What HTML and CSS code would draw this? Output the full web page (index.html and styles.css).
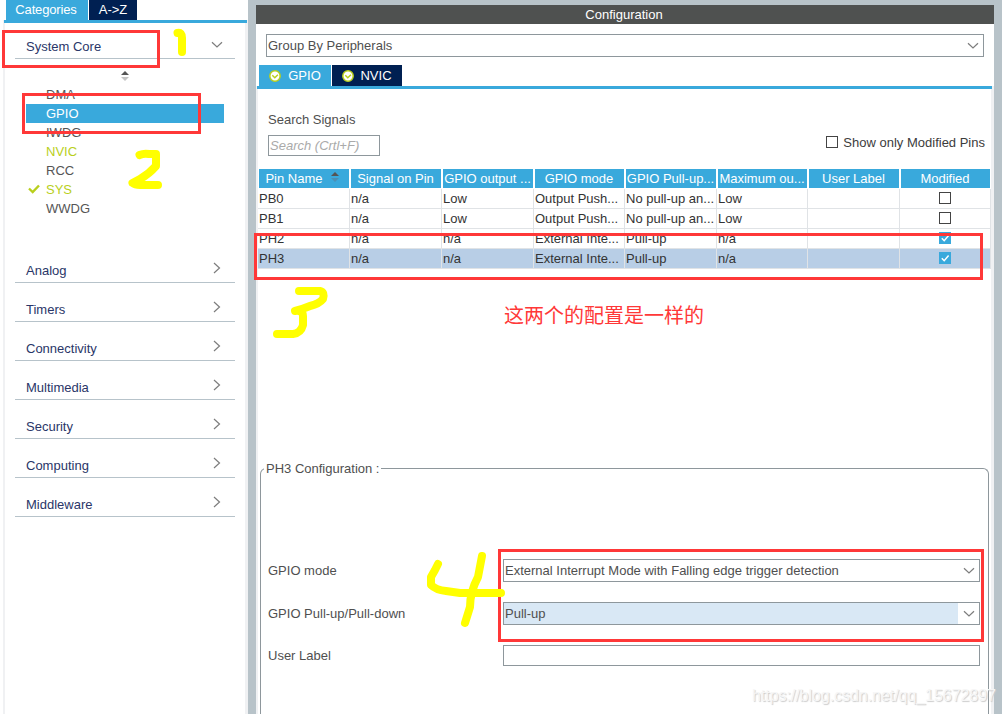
FILE: index.html
```html
<!DOCTYPE html>
<html lang="en">
<head>
<meta charset="utf-8">
<title>Configuration</title>
<link rel="stylesheet" href="styles.css">
</head>
<body>
<svg class="defs" width="0" height="0">
  <symbol id="right" viewBox="0 0 8 12"><path d="M1 1L6.500 6L1 11" fill="none" stroke="#7d7d7d" stroke-width="1.2"/></symbol>
  <symbol id="down" viewBox="0 0 12 8"><path d="M1 1.2L6 6L11 1.2" fill="none" stroke="#7d7d7d" stroke-width="1.2"/></symbol>
  <symbol id="ok" viewBox="0 0 12 12"><circle cx="6" cy="6" r="5.2" fill="#fff" stroke="#b9cf1c" stroke-width="1.5"/><path d="M3.3 5.3L5.8 7.7L8.9 4.7" fill="none" stroke="#b9cf1c" stroke-width="1.5"/></symbol>
  <symbol id="tick" viewBox="0 0 12 12"><path d="M2.8 6.2L5.2 8.7L9.6 3.6" fill="none" stroke="#fff" stroke-width="1.5"/></symbol>
</svg>
<div class="app">
  <aside class="sidebar">
    <div class="side-tabs"><span class="tab cat">Categories</span><span class="tab dark az">A-&gt;Z</span></div>
    <div class="side-body">
      <div class="group first"><span>System Core</span><svg class="i-down"><use href="#down"/></svg></div>
      <div class="open">
        <svg class="sort" viewBox="0 0 8 10"><path d="M0 4L4 0L8 4Z" fill="#555"/><path d="M0 6H8L4 10Z" fill="#c4c4c4"/></svg>
        <ul class="list">
          <li>DMA</li>
          <li class="active">GPIO</li>
          <li>IWDG</li>
          <li class="green">NVIC</li>
          <li>RCC</li>
          <li class="green"><svg class="check" viewBox="0 0 12 10"><path d="M1 4.5L4.7 8L11 1.5" fill="none" stroke="#b9cf1c" stroke-width="2.4"/></svg>SYS</li>
          <li>WWDG</li>
        </ul>
      </div>
      <div class="group"><span>Analog</span><svg class="i-right"><use href="#right"/></svg></div>
      <div class="group"><span>Timers</span><svg class="i-right"><use href="#right"/></svg></div>
      <div class="group"><span>Connectivity</span><svg class="i-right"><use href="#right"/></svg></div>
      <div class="group"><span>Multimedia</span><svg class="i-right"><use href="#right"/></svg></div>
      <div class="group"><span>Security</span><svg class="i-right"><use href="#right"/></svg></div>
      <div class="group"><span>Computing</span><svg class="i-right"><use href="#right"/></svg></div>
      <div class="group"><span>Middleware</span><svg class="i-right"><use href="#right"/></svg></div>
    </div>
  </aside>
  <main class="frame">
    <div class="panel">
      <header class="title">Configuration</header>
      <div class="combo grouping"><span>Group By Peripherals</span><svg class="i-down"><use href="#down"/></svg></div>
      <div class="tabs">
        <span class="tab gpio"><svg class="i-ok"><use href="#ok"/></svg>GPIO</span>
        <span class="tab dark nvic"><svg class="i-ok"><use href="#ok"/></svg>NVIC</span>
      </div>
      <section class="content">
        <div class="filters">
          <div class="search"><label>Search Signals</label><div class="search-box">Search (Crtl+F)</div></div>
          <div class="modified"><i class="box"></i><span>Show only Modified Pins</span></div>
        </div>
        <div class="table">
          <div class="row head"><div><b>Pin Name</b><svg class="sort" viewBox="0 0 8 10"><path d="M0 4L4 0L8 4Z" fill="#555"/><path d="M0 6H8L4 10Z" fill="#4a90b5"/></svg></div><div>Signal on Pin</div><div>GPIO output ...</div><div>GPIO mode</div><div>GPIO Pull-up...</div><div>Maximum ou...</div><div>User Label</div><div>Modified</div></div>
          <div class="row"><div>PB0</div><div>n/a</div><div>Low</div><div>Output Push...</div><div>No pull-up an...</div><div>Low</div><div></div><div><i class="box"></i></div></div>
          <div class="row"><div>PB1</div><div>n/a</div><div>Low</div><div>Output Push...</div><div>No pull-up an...</div><div>Low</div><div></div><div><i class="box"></i></div></div>
          <div class="row"><div>PH2</div><div>n/a</div><div>n/a</div><div>External Inte...</div><div>Pull-up</div><div>n/a</div><div></div><div><svg class="box on"><use href="#tick"/></svg></div></div>
          <div class="row selected"><div>PH3</div><div>n/a</div><div>n/a</div><div>External Inte...</div><div>Pull-up</div><div>n/a</div><div></div><div><svg class="box on"><use href="#tick"/></svg></div></div>
        </div>
        <div class="config">
          <div class="legend">PH3 Configuration :</div>
          <div class="field"><label>GPIO mode</label><div class="combo"><span>External Interrupt Mode with Falling edge trigger detection</span><svg class="i-down"><use href="#down"/></svg></div></div>
          <div class="field"><label>GPIO Pull-up/Pull-down</label><div class="combo focus"><span>Pull-up</span><svg class="i-down"><use href="#down"/></svg></div></div>
          <div class="field last"><label>User Label</label><div class="combo plain"></div></div>
        </div>
      </section>
    </div>
  </main>
</div>
<svg class="marks" viewBox="0 0 1005 714">
  <g fill="none" stroke="#ff3838" stroke-width="3">
    <rect x="3.500" y="31.500" width="155" height="35"/>
    <rect x="23.500" y="94.500" width="176" height="38"/>
    <rect x="255.500" y="234.500" width="726" height="44"/>
    <rect x="499.500" y="550.500" width="483" height="90"/>
  </g>
  <g fill="none" stroke="#ff0" stroke-width="8" stroke-linecap="round" stroke-linejoin="round">
    <path d="M177.500 33Q182 32 182 38V52"/>
    <path d="M139.500 155Q144 153 149 154L156 154V166Q149 174 140 179L132.500 183Q135 185 140 185H158"/>
    <path d="M299 291H320Q325 292 323 299Q319 304 310 306Q303 309 295 311Q303 310 303 316V325Q301 333 293 334H277"/>
    <path d="M438 564L435 570L431 577V585Q436 590 446 591L460 593H501M482 556L478 577Q470 592 470 607L465 623"/>
  </g>
</svg>
<div class="note">这两个的配置是一样的</div>
<div class="watermark">https://blog.csdn.net/qq_15672897</div>
</body>
</html>
```
FILE: styles.css
```css
* { box-sizing: border-box; }
body { margin: 0; background: #fff; overflow: hidden; font: 13px/16px "Liberation Sans", Arial, sans-serif; color: #4f4f4f; position: relative; }
.defs { position: absolute; }
.app { display: flex; width: 1002px; height: 714px; }
.sidebar { width: 248px; padding-left: 3px; }
.side-tabs { display: flex; gap: 1px; height: 20px; padding-left: 3px; }
.tab { display: flex; align-items: center; justify-content: center; background: #39a9dc; color: #fff; }
.tab.dark { background: #002052; }
.cat { width: 82px; letter-spacing: -0.15px; padding-right: 2px; }
.az { width: 48px; }
.side-body { height: 694px; border: solid #f0f1f3; border-width: 0 3px 0 2px; position: relative; padding: 0 10px; }
.side-body::before { content: ""; position: absolute; left: -1px; right: -2px; top: 0; height: 3px; background: #39a9dc; }
.group { display: flex; justify-content: space-between; height: 39px; padding: 18px 14px 0 11px; border-bottom: 1px solid #b7c3ca; color: #2a3668; }
.group span { padding-top: 1px; }
.i-right { width: 8px; height: 12px; }
.i-down { width: 12px; height: 8px; }
.group .i-down { margin-top: 3px; margin-right: -2px; }
.open { height: 185px; padding-top: 12px; display: flex; flex-direction: column; align-items: center; }
.sort { width: 8px; height: 10px; }
.list { list-style: none; margin: 4px 0 0; padding: 0; width: 198px; }
.list li { position: relative; height: 19px; line-height: 19px; padding-left: 20px; color: #555; }
.list .active { background: #39a9dc; color: #fff; }
.list .green { color: #b9cf1c; }
.check { position: absolute; left: 2px; top: 4px; width: 12px; height: 10px; }
.frame { width: 754px; padding: 5px 8px 0; background: #b8c3c9; }
.panel { height: 709px; background: #fff; display: flex; flex-direction: column; }
.title { height: 19px; line-height: 19px; text-align: center; background: #4f5150; color: #fff; padding-right: 2px; }
.combo { display: flex; align-items: center; justify-content: space-between; height: 23px; border: 1px solid #8e979c; padding: 0 4px 0 1px; background: #fff; }
.grouping { margin: 10px 10px 8px; }
.tabs { display: flex; gap: 1px; padding-left: 3px; height: 21px; }
.gpio { width: 72px; gap: 7px; }
.nvic { width: 70px; gap: 6px; }
.i-ok { width: 12px; height: 12px; }
.content { flex: 1; border: solid #f0f1f3; border-width: 0 3px 0 2px; position: relative; padding-top: 25px; }
.content::before { content: ""; position: absolute; top: 0; left: -1px; right: -1px; height: 3px; background: #39a9dc; }
.filters { display: flex; justify-content: space-between; height: 58px; padding: 0 6px 0 10px; }
.search { display: flex; flex-direction: column; }
.search label { padding-top: 1px; height: 24px; }
.search-box { width: 112px; height: 21px; line-height: 19px; padding-left: 1px; border: 1px solid #8e979c; color: #aaa; font-style: italic; }
.modified { display: flex; gap: 5px; padding-top: 23px; color: #3c3c3c; }
.modified span { padding-top: 1px; }
.box { display: block; width: 12px; height: 12px; border: 1px solid #444; background: #fff; }
.modified .box { margin-top: 2px; }
.box.on { border: 0; background: #39a9dc; }
.row { display: grid; grid-template-columns: 92px 92px 92px 91px 92px 91px 92px 91px; height: 20px; line-height: 19px; color: #333; }
.row > div { border: solid #e0e3e6; border-width: 0 1px 1px 0; padding-left: 1px; white-space: nowrap; overflow: hidden; }
.row > div:last-child { display: flex; justify-content: center; align-items: flex-start; padding: 3px 0 0; }
.selected > div { background: #b8cee6; }
.head > div, .head > div:last-child { display: flex; justify-content: center; background: #39a9dc; color: #fff; border: solid #fff; border-width: 0 0 1px 1px; margin-right: 1px; padding: 0 1px 0 0; }
.head b { font-weight: normal; margin-right: 8px; }
.head > div:first-child { padding-right: 4px; }
.head .sort { margin-top: 3px; }
.config { position: relative; margin: 199px 2px 0; height: 246px; border: 1px solid #8e979c; border-bottom: 0; border-radius: 6px 6px 0 0; padding: 90px 8px 0 7px; }
.legend { position: absolute; left: 3px; top: -8px; padding: 0 2px; background: #fff; }
.field { display: grid; grid-template-columns: 235px 477px; align-items: start; height: 43px; }
.field label { padding-top: 4px; }
.field.last label { padding-top: 3px; }
.focus { background: linear-gradient(to right, #d9e8f5 454px, #fff 454px); }
.plain { height: 21px; }
.marks { position: absolute; left: 0; top: 0; width: 1005px; height: 714px; }
.note { position: absolute; left: 504px; top: 303px; font: 400 20px/24px "Noto Sans CJK SC", sans-serif; color: #ff3838; white-space: nowrap; }
.watermark { position: absolute; left: 752px; top: 686px; font-size: 16px; line-height: 20px; letter-spacing: -0.05px; color: #f6f6f6; text-shadow: 1px 1px 1px #ccc; white-space: nowrap; }
```
